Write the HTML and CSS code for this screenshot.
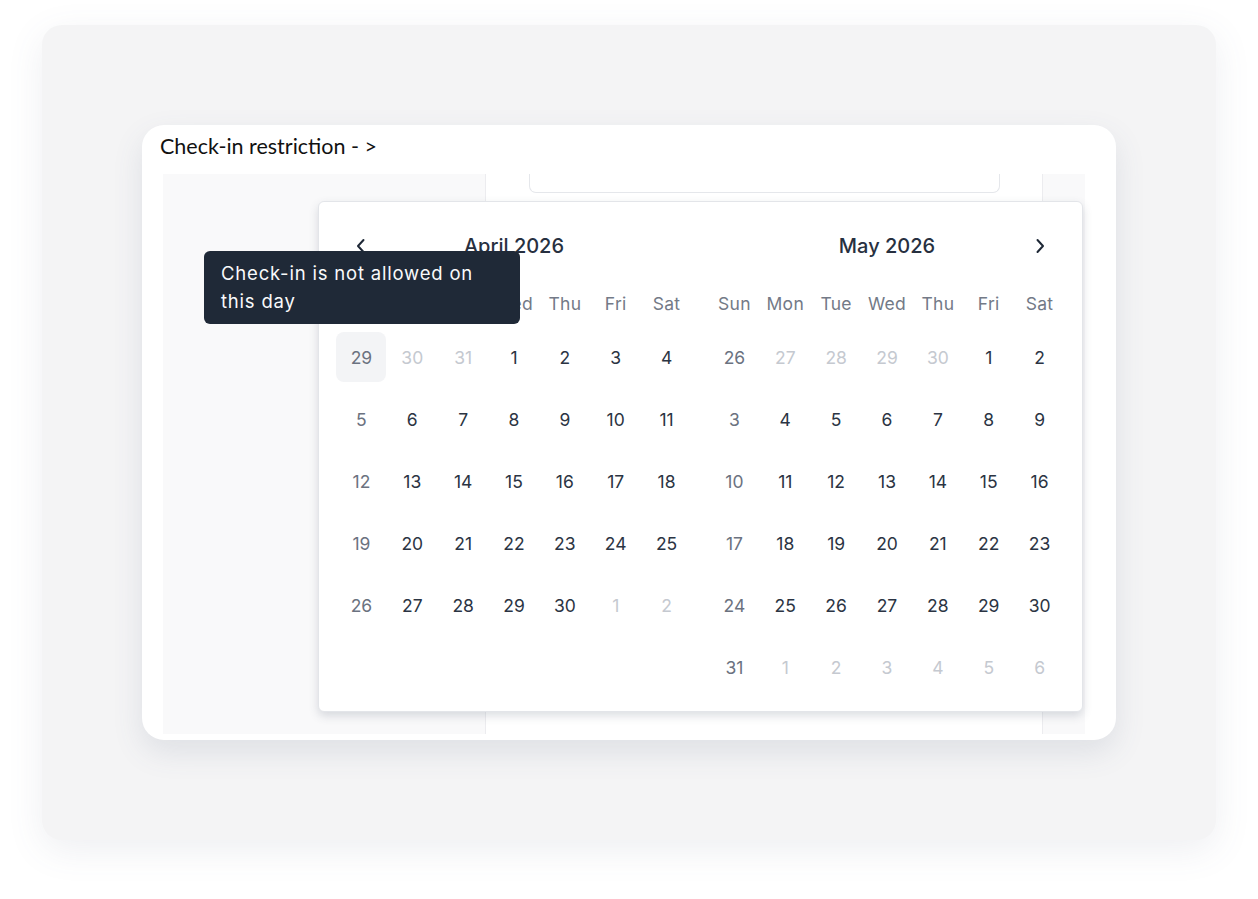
FILE: index.html
```html
<!DOCTYPE html>
<html lang="en">
<head>
    <meta charset="UTF-8">
    <meta name="viewport" content="width=device-width, initial-scale=1.0">
    <title>Check-in restriction</title>
    <link rel="stylesheet" href="styles.css">
</head>
<body>
    <div class="frame">
        <div class="card">
            <h2 class="card-title">Check-in restriction - &gt;</h2>
            <div class="shot">
                <div class="shot-side"></div>
                <div class="shot-main">
                    <div class="field"><span class="field-dash"></span></div>
                </div>
                <div class="shot-rest"></div>

                <div class="calendar">
                    <div class="month">
                        <div class="month-head">
                            <button class="nav prev" aria-label="Previous month">
                                <svg width="10" height="16" viewBox="0 0 10 16"><path d="M7.5 2 L2 8 L7.5 14" fill="none" stroke="#1f2937" stroke-width="2" stroke-linecap="round" stroke-linejoin="round"/></svg>
                            </button>
                            <div class="month-name">April 2026</div>
                        </div>
                        <div class="weekdays">
                            <span>Sun</span><span>Mon</span><span>Tue</span><span>Wed</span><span>Thu</span><span>Fri</span><span>Sat</span>
                        </div>
                        <div class="days">
                            <span class="day sun hover">29</span><span class="day muted">30</span><span class="day muted">31</span><span class="day">1</span><span class="day">2</span><span class="day">3</span><span class="day">4</span>
                            <span class="day sun">5</span><span class="day">6</span><span class="day">7</span><span class="day">8</span><span class="day">9</span><span class="day">10</span><span class="day">11</span>
                            <span class="day sun">12</span><span class="day">13</span><span class="day">14</span><span class="day">15</span><span class="day">16</span><span class="day">17</span><span class="day">18</span>
                            <span class="day sun">19</span><span class="day">20</span><span class="day">21</span><span class="day">22</span><span class="day">23</span><span class="day">24</span><span class="day">25</span>
                            <span class="day sun">26</span><span class="day">27</span><span class="day">28</span><span class="day">29</span><span class="day">30</span><span class="day muted">1</span><span class="day muted">2</span>
                        </div>
                    </div>

                    <div class="month">
                        <div class="month-head">
                            <div class="month-name">May 2026</div>
                            <button class="nav next" aria-label="Next month">
                                <svg width="10" height="16" viewBox="0 0 10 16"><path d="M2.5 2 L8 8 L2.5 14" fill="none" stroke="#1f2937" stroke-width="2" stroke-linecap="round" stroke-linejoin="round"/></svg>
                            </button>
                        </div>
                        <div class="weekdays">
                            <span>Sun</span><span>Mon</span><span>Tue</span><span>Wed</span><span>Thu</span><span>Fri</span><span>Sat</span>
                        </div>
                        <div class="days">
                            <span class="day sun">26</span><span class="day muted">27</span><span class="day muted">28</span><span class="day muted">29</span><span class="day muted">30</span><span class="day">1</span><span class="day">2</span>
                            <span class="day sun">3</span><span class="day">4</span><span class="day">5</span><span class="day">6</span><span class="day">7</span><span class="day">8</span><span class="day">9</span>
                            <span class="day sun">10</span><span class="day">11</span><span class="day">12</span><span class="day">13</span><span class="day">14</span><span class="day">15</span><span class="day">16</span>
                            <span class="day sun">17</span><span class="day">18</span><span class="day">19</span><span class="day">20</span><span class="day">21</span><span class="day">22</span><span class="day">23</span>
                            <span class="day sun">24</span><span class="day">25</span><span class="day">26</span><span class="day">27</span><span class="day">28</span><span class="day">29</span><span class="day">30</span>
                            <span class="day sun">31</span><span class="day muted">1</span><span class="day muted">2</span><span class="day muted">3</span><span class="day muted">4</span><span class="day muted">5</span><span class="day muted">6</span>
                        </div>
                    </div>
                </div>

                <div class="tooltip">Check-in is not allowed on this day</div>
            </div>
        </div>
    </div>
</body>
</html>
```

FILE: styles.css
```css
* {
    margin: 0;
    padding: 0;
    box-sizing: border-box;
}

body {
    background-color: #ffffff;
    font-family: Inter, "Noto Sans", sans-serif;
    width: 1258px;
    height: 899px;
    overflow: hidden;
}

.frame {
    margin: 25px 0 0 42px;
    width: 1174px;
    height: 815px;
    padding: 100px 0 0 100px;
    background-color: #f4f4f5;
    border-radius: 20px;
    box-shadow: 0 10px 36px rgba(90, 100, 130, 0.10);
}

.card {
    width: 974px;
    height: 615px;
    padding: 8px 31px 0 18px;
    background-color: #ffffff;
    border-radius: 22px;
    overflow: hidden;
    box-shadow: 0 12px 30px rgba(80, 90, 125, 0.13);
}

.card-title {
    font-family: Lato, "Liberation Sans", sans-serif;
    font-weight: 400;
    font-size: 21.5px;
    line-height: 27px;
    color: #111111;
    margin-bottom: 14px;
}

.shot {
    position: relative;
    display: flex;
    width: 922px;
    height: 560px;
    margin-left: 3px;
}

.shot-side {
    width: 322px;
    background-color: #f9f9fa;
}

.shot-main {
    width: 558px;
    background-color: #ffffff;
    border-left: 1px solid #ececef;
    border-right: 1px solid #ececef;
    overflow: hidden;
}

.shot-rest {
    flex: 1;
    background-color: #f9f9fa;
}

.field {
    width: 471px;
    height: 23px;
    margin: -4px 0 0 43px;
    padding: 2px 0 0 20px;
    border: 1px solid #e5e7eb;
    border-top: none;
    border-radius: 0 0 7px 7px;
}

.field-dash {
    display: block;
    width: 17px;
    height: 2px;
    border-radius: 1px;
    background-color: #9ca3af;
}

/* date picker popup */
.calendar {
    position: absolute;
    left: 155px;
    top: 27px;
    width: 765px;
    height: 511px;
    display: flex;
    gap: 17px;
    padding: 23px 17px 0 17px;
    background-color: #ffffff;
    border: 1px solid #e3e5e9;
    border-radius: 6px;
    box-shadow: 0 4px 10px rgba(60, 70, 95, 0.18);
}

.month {
    width: 356px;
}

.month-head {
    display: grid;
    grid-template-columns: repeat(7, 1fr);
    align-items: center;
    height: 42px;
}

.month-name {
    grid-column: 2 / 7;
    text-align: center;
    font-size: 20px;
    font-weight: 500;
    color: #27303f;
}

.nav {
    background: none;
    border: none;
    cursor: pointer;
    display: flex;
    justify-content: center;
    align-items: center;
    height: 40px;
}

.weekdays {
    display: grid;
    grid-template-columns: repeat(7, 1fr);
    margin-top: 25px;
    height: 24px;
    line-height: 24px;
    text-align: center;
    font-size: 17.5px;
    letter-spacing: 0.3px;
    color: #737a87;
}

.days {
    display: grid;
    grid-template-columns: repeat(7, 1fr);
    row-gap: 12px;
    margin-top: 16px;
}

.day {
    justify-self: center;
    width: 50px;
    height: 50px;
    display: flex;
    justify-content: center;
    align-items: center;
    font-size: 17.5px;
    color: #2b3443;
    border-radius: 8px;
}

.day.sun {
    color: #6b7280;
}

.day.muted {
    color: #c5c9d0;
}

.day.hover {
    background-color: #f3f4f6;
}

.tooltip {
    position: absolute;
    left: 41px;
    top: 77px;
    width: 316px;
    padding: 8px 17px 9px;
    background-color: #1f2937;
    color: #f9fafb;
    border-radius: 6px;
    font-size: 18.5px;
    letter-spacing: 0.8px;
    line-height: 28px;
}
```
